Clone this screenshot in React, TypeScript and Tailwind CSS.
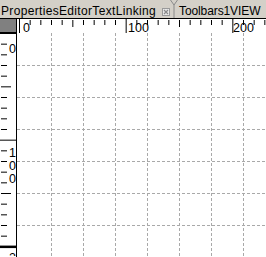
import React from "react";

const FONT = { fontFamily: '"Liberation Sans", Arial, sans-serif' };

// ruler scale: 10 units = 32/3 px, origin sits 2.5px inside the canvas
const STEP = 32 / 3;

const HRuler = () => {
  const ticks = [];
  for (let k = 0; k <= 23; k++) {
    const x = 2.5 + k * STEP;
    if (k % 10 === 0) {
      ticks.push(<line key={k} x1={x} y1={0} x2={x} y2={14} stroke="#000" strokeWidth={1} />);
    } else {
      const len = k % 5 === 0 ? 7 : 5;
      ticks.push(<line key={k} x1={x} y1={1} x2={x} y2={1 + len} stroke="#000" strokeWidth={1} />);
    }
  }
  return (
    <svg width={249} height={14} className="block">
      <rect x={0} y={0} width={249} height={14} fill="#fff" />
      {ticks}
      <text x={6} y={12.5} fontSize={12.5} style={FONT} fill="#000">0</text>
      <text x={111} y={12.5} fontSize={12.5} style={FONT} fill="#000">100</text>
      <text x={216} y={12.5} fontSize={12.5} style={FONT} fill="#000">200</text>
    </svg>
  );
};

const VRuler = () => {
  const ticks = [];
  for (let k = 0; k <= 21; k++) {
    const y = 0.5 + k * STEP;
    if (k % 10 === 0) {
      ticks.push(<line key={k} x1={0} y1={y} x2={16} y2={y} stroke="#000" strokeWidth={k === 20 ? 2.5 : 1} />);
    } else {
      const len = k % 5 === 0 ? 10 : 6;
      ticks.push(<line key={k} x1={1} y1={y} x2={1 + len} y2={y} stroke="#000" strokeWidth={1} />);
    }
  }
  const digit = (d: string, y: number, key: string) => (
    <text key={key} x={9} y={y} fontSize={12.5} style={FONT} fill="#000">{d}</text>
  );
  return (
    <svg width={16} height={223} className="block">
      <rect x={0} y={0} width={16} height={223} fill="#fff" />
      {ticks}
      {digit("0", 20, "a")}
      {digit("1", 124, "b")}
      {digit("0", 137, "c")}
      {digit("0", 150, "d")}
      {digit("2", 229, "e")}
    </svg>
  );
};

const Grid = () => {
  const v = [];
  for (let k = 1; k <= 7; k++) {
    const x = 2.5 + k * 32;
    v.push(<line key={"v" + k} x1={x} y1={0} x2={x} y2={223} stroke="#a9a9a9" strokeDasharray="3 2" />);
  }
  const h = [];
  for (let k = 1; k <= 6; k++) {
    const y = k * 32 + 0.5;
    h.push(<line key={"h" + k} x1={0} y1={y} x2={249} y2={y} stroke="#a9a9a9" strokeDasharray="3 2" />);
  }
  return (
    <svg width={249} height={223} className="block">
      <rect x={0} y={0} width={249} height={223} fill="#fff" />
      {h}
      {v}
    </svg>
  );
};

export default function App() {
  return (
    <div className="w-[266px] h-[257px] bg-white flex flex-col overflow-hidden" style={FONT}>
      {/* tab strip */}
      <div className="h-[19px] bg-[#d4d0c8] flex items-end border-b border-black">
        <div className="h-[15px] flex items-center pl-[1px] text-[12px] leading-none text-black tracking-[0.33px] whitespace-nowrap">
          PropertiesEditorTextLinking
          <svg width={8} height={8} className="ml-[6px] mt-[2px]">
            <rect x={0.5} y={0.5} width={7} height={7} fill="#e8e8e8" stroke="#9a9a9a" />
            <path d="M2 2 L6 6 M6 2 L2 6" stroke="#8a8a8a" strokeWidth={1.2} />
          </svg>
        </div>
        <svg width={8} height={18} className="self-start">
          <path d="M0.5 0 L4 5 L7.5 0 M4 5 L4 18" stroke="#8a8a8a" fill="none" />
        </svg>
        <div className="h-[15px] flex items-center pl-[1px] text-[12px] leading-none text-black whitespace-nowrap tracking-[-0.1px]">
          Toolbars1VIEW
        </div>
      </div>
      {/* top ruler row */}
      <div className="h-[14px] flex border-b border-black">
        <div className="w-[17px] bg-[#808080] border-r border-black" />
        <HRuler />
      </div>
      {/* body */}
      <div className="flex-1 flex">
        <div className="w-[17px] border-r border-black">
          <VRuler />
        </div>
        <Grid />
      </div>
    </div>
  );
}
